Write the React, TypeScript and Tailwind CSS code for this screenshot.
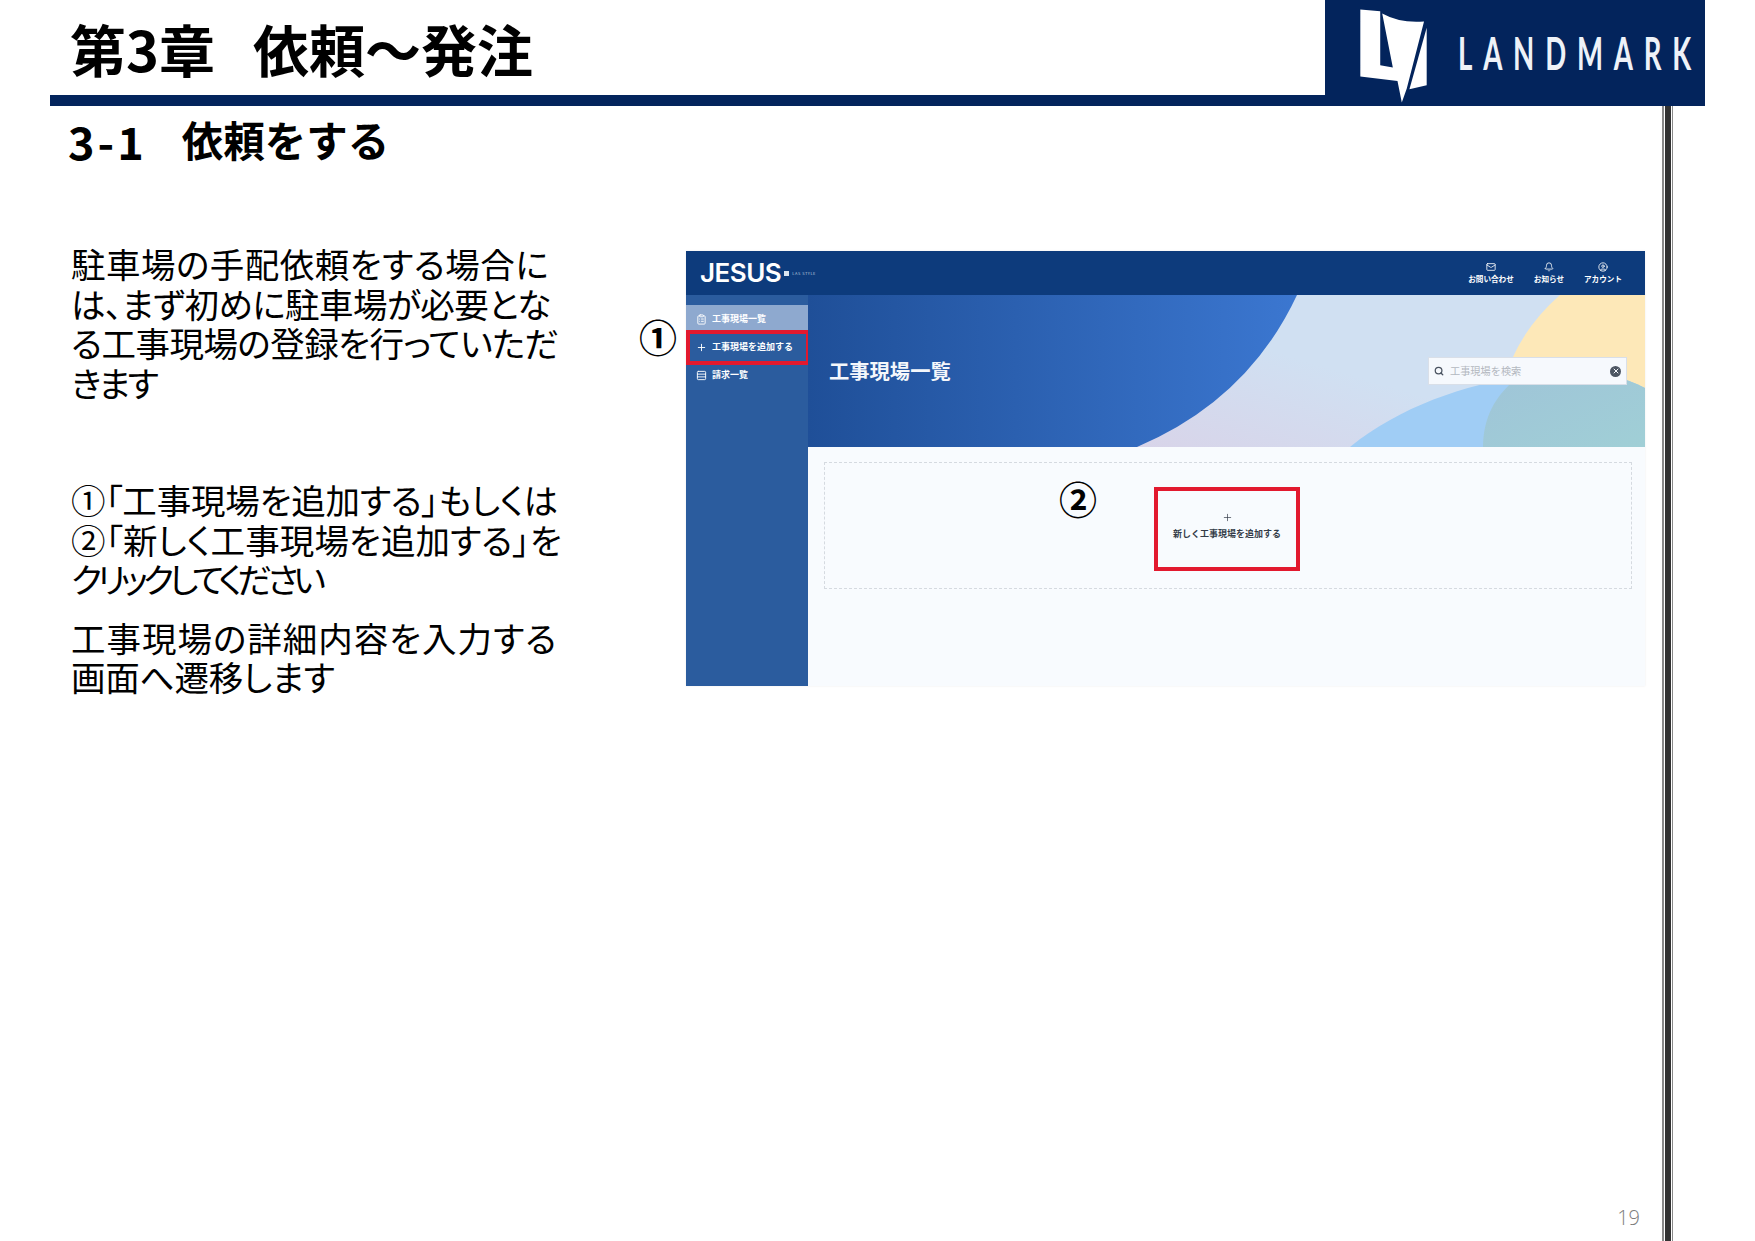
import { Bell, CircleUser, ClipboardList, Mail, Plus, Rows3, Search, X } from "lucide-react";

const JP = "font-['Noto_Sans_CJK_JP',sans-serif]";

function LandmarkLogo() {
  return (
    <svg viewBox="170 20 220 300" className="w-[73px] h-[100px] shrink-0" aria-hidden>
      <path d="M180 30 L240 35 L240 198 L278 205 L246 42 Q300 72 372 66 L320 268 L305 310 L292 245 L180 232 Z" fill="#fff" />
      <path d="M380 85 L380 258 L328 270 Z" fill="#fff" />
    </svg>
  );
}

function HeroArt() {
  return (
    <svg viewBox="0 0 837 152" preserveAspectRatio="none" className="absolute inset-0 w-full h-full" aria-hidden>
      <defs>
        <linearGradient id="heroBlue" x1="0" y1="0" x2="1" y2="0">
          <stop offset="0" stopColor="#1f4f98" />
          <stop offset="0.6" stopColor="#3c78d2" />
        </linearGradient>
        <linearGradient id="heroLight" x1="0" y1="1" x2="1" y2="0">
          <stop offset="0" stopColor="#d8d4e9" />
          <stop offset="0.45" stopColor="#d0e0f2" />
        </linearGradient>
        <linearGradient id="heroTeal" x1="0" y1="0" x2="1" y2="1">
          <stop offset="0" stopColor="#9fc4d8" />
          <stop offset="1" stopColor="#a0cfd6" />
        </linearGradient>
      </defs>
      <rect width="837" height="152" fill="url(#heroBlue)" />
      <path d="M489 0 Q 440 105 329 152 L837 152 L837 0 Z" fill="url(#heroLight)" />
      <path d="M752 0 Q 720 28 704 64 L837 130 L837 0 Z" fill="#fde8b8" />
      <path d="M542 152 C 600 105 680 82 750 78 C 785 76 812 80 837 93 L837 152 Z" fill="#a0cdf5" />
      <path d="M675 152 C 675 122 688 100 708 84 C 760 70 805 76 837 93 L837 152 Z" fill="url(#heroTeal)" />
    </svg>
  );
}

function NavItem({ icon, label, active }: { icon: React.ReactNode; label: string; active?: boolean }) {
  return (
    <div className={`h-[28px] flex items-center gap-[5px] pl-[10px] text-[9px] font-bold text-white ${active ? "bg-[#8ea9cf]" : ""}`}>
      {icon}
      <span>{label}</span>
    </div>
  );
}

function TopLink({ icon, label }: { icon: React.ReactNode; label: string }) {
  return (
    <div className="flex flex-col items-center gap-[2px] text-[7.6px] leading-[10px] font-bold text-white">
      {icon}
      <span>{label}</span>
    </div>
  );
}

function Line({ children, className = "" }: { children: React.ReactNode; className?: string }) {
  return <span className={`block whitespace-nowrap ${className}`}>{children}</span>;
}

export default function App() {
  return (
    <div className={`w-[1755px] h-[1241px] bg-white flex flex-col overflow-hidden text-black ${JP}`}>
      <header className="h-[106px] pl-[50px] pr-[50px] flex shrink-0">
        <div className="flex-1 flex flex-col">
          <div className="h-[95px] pl-[20px] flex items-center gap-[38px] text-[56px] leading-none font-bold">
            <span>第3章</span>
            <span>依頼～発注</span>
          </div>
          <div className="h-[11px] bg-[#03245c]" />
        </div>
        <div className="w-[380px] bg-[#03245c] flex items-center pl-[32px] pt-[6px] overflow-hidden">
          <LandmarkLogo />
          <span className="ml-[28px] mt-[-6px] font-['Lato',sans-serif] font-bold text-[46px] leading-none text-[#eef2f8] tracking-[18px] scale-x-[0.6] origin-left whitespace-nowrap">
            LANDMARK
          </span>
        </div>
      </header>

      <div className="flex-1 flex min-h-0">
        <main className="w-[1662px] flex flex-col pl-[68px]">
          <h2 className="h-[68px] flex items-center gap-[35px] text-[41.5px] leading-none font-bold">
            <span className="text-[45px] tracking-[3px]">3-1</span>
            <span>依頼をする</span>
          </h2>

          <div className="mt-[70px] flex items-start">
            <div className="w-[618px] pl-[3px] text-[34.5px] leading-[39.5px] [font-feature-settings:'palt']">
              <p>
                <Line className="tracking-[0.5px]">駐車場の手配依頼をする場合に</Line>
                <Line className="tracking-[-0.5px]">は、まず初めに駐車場が必要とな</Line>
                <Line className="tracking-[-0.5px]">る工事現場の登録を行っていただ</Line>
                <Line className="tracking-[-2.7px]">きます</Line>
              </p>
              <p className="mt-[78px]">
                <Line className="tracking-[-0.2px]">①「工事現場を追加する」もしくは</Line>
                <Line className="tracking-[0.1px]">②「新しく工事現場を追加する」を</Line>
                <Line className="tracking-[-4.8px]">クリックしてください</Line>
              </p>
              <p className="mt-[19px]">
                <Line className="tracking-[1px]">工事現場の詳細内容を入力する</Line>
                <Line className="tracking-[-0.2px]">画面へ遷移します</Line>
              </p>
            </div>

            <div className="relative mt-[7px] w-[959px] h-[435px] flex flex-col shadow-[0_0_2px_rgba(0,0,0,0.08)]">
              <span className="absolute left-[-47px] top-[63px] text-[38px] leading-[44px] font-bold">①</span>

              <div className="h-[44px] bg-[#0d3b7c] flex items-center justify-between pl-[14px] pr-[23px] shrink-0">
                <div className="flex items-center gap-[3px]">
                  <span className="font-['Inter',sans-serif] text-[26px] leading-none font-semibold text-white tracking-[-0.5px]">JESUS</span>
                  <span className="w-[5px] h-[5px] bg-[#dbe4f0]" />
                  <span className="text-[4px] leading-none text-[#b9c8df] tracking-[0.5px]">LAS STYLE</span>
                </div>
                <div className="flex items-start gap-[20px]">
                  <TopLink icon={<Mail size={10} strokeWidth={2} />} label="お問い合わせ" />
                  <TopLink icon={<Bell size={10} strokeWidth={2} />} label="お知らせ" />
                  <TopLink icon={<CircleUser size={10} strokeWidth={2} />} label="アカウント" />
                </div>
              </div>

              <div className="flex-1 flex min-h-0">
                <aside className="w-[122px] bg-[#2b5c9e] pt-[10px] shrink-0">
                  <NavItem active icon={<ClipboardList size={11} />} label="工事現場一覧" />
                  <div className="relative">
                    <NavItem icon={<Plus size={11} />} label="工事現場を追加する" />
                    <div className="absolute left-0 top-[-3px] w-[124px] h-[35px] border-[4px] border-[#e2192e]" />
                  </div>
                  <NavItem icon={<Rows3 size={11} />} label="請求一覧" />
                </aside>

                <div className="flex-1 flex flex-col bg-[#f8fbfe]">
                  <div className="relative h-[152px] shrink-0 flex items-center justify-between pl-[21px] pr-[18px]">
                    <HeroArt />
                    <h1 className="relative mt-[-2px] text-[20.3px] leading-none font-bold text-[#f4f7fb]">工事現場一覧</h1>
                    <div className="relative w-[199px] h-[28px] bg-[#f6f9fd] border border-[#d9dfe8] flex items-center pl-[5px] pr-[5px] gap-[6px] text-[10.2px] text-[#b3b8c0]">
                      <Search size={10} strokeWidth={3} className="text-[#4a5360]" />
                      <span className="flex-1">工事現場を検索</span>
                      <span className="w-[11px] h-[11px] rounded-full bg-[#4d5663] flex items-center justify-center">
                        <X size={8} strokeWidth={3} className="text-[#f6f9fd]" />
                      </span>
                    </div>
                  </div>

                  <div className="relative mt-[15px] ml-[16px] mr-[13px] h-[127px] border border-dashed border-[#d5dae0] flex justify-center pt-[24px] pr-[2px]">
                    <span className="absolute left-[234px] top-[13px] text-[38px] leading-[44px] font-bold">②</span>
                    <div className="w-[146px] h-[84px] border-[4px] border-[#e2192e] flex flex-col items-center justify-center gap-[6px] pb-[7px] text-[#333b47]">
                      <Plus size={11} strokeWidth={1.5} />
                      <span className="text-[9px] leading-[10px] font-bold whitespace-nowrap">新しく工事現場を追加する</span>
                    </div>
                  </div>
                </div>
              </div>
            </div>
          </div>

          <div className="mt-auto mb-[11px] mr-[22px] self-end font-['Open_Sans',sans-serif] font-light text-[20px] leading-[24px] text-[#7c7c7c]">19</div>
        </main>

        <div className="w-[11px] flex justify-between shrink-0">
          <div className="w-[2px] bg-[#8a8a8a]" />
          <div className="w-[6px] bg-[#333333]" />
          <div className="w-[1px] bg-[#8a8a8a]" />
        </div>
      </div>
    </div>
  );
}
